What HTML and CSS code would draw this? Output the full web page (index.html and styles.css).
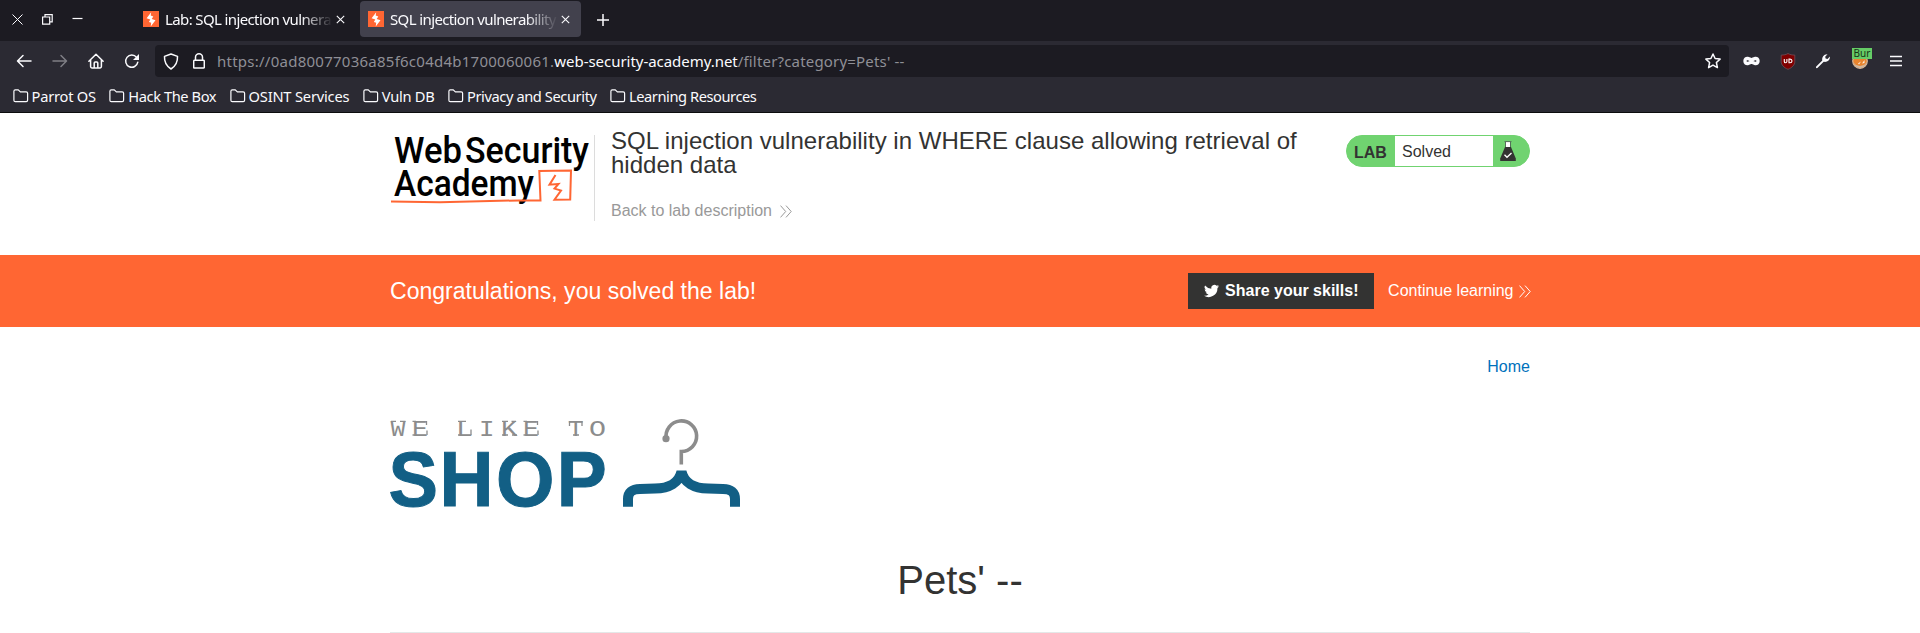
FILE: index.html
```html
<!DOCTYPE html>
<html lang="en">
<head>
<meta charset="utf-8">
<title>SQL injection vulnerability in WHERE clause allowing retrieval of hidden data</title>
<link rel="stylesheet" href="styles.css">
</head>
<body>
<svg class="defs" width="0" height="0">
  <symbol id="bolt" viewBox="0 0 16 16"><rect width="16" height="16" fill="#ff6633"/><path d="M8.2 1.2 3.6 7.2 7.3 8.6 5.9 10.9 8.2 11.7 7.7 15.6 12.5 9.3 8.7 7.9 10.3 5.4 7.7 4.5Z" fill="#fff"/></symbol>
  <symbol id="close" viewBox="0 0 9 9"><path d="M.8.8 8.2 8.2M8.2.8.8 8.2" fill="none" stroke="currentColor" stroke-width="1.1"/></symbol>
  <symbol id="folder" viewBox="0 0 16 14"><path d="M.9 11.2V2.3Q.9.9 2.3.9H5.2L7.4 2.9H13.2Q14.6 2.9 14.6 4.3V11.2Q14.6 12.6 13.2 12.6H2.3Q.9 12.6.9 11.2Z" fill="none" stroke="currentColor" stroke-width="1.2"/></symbol>
  <symbol id="more" viewBox="0 0 12 13"><path d="M.5.6 5.7 6.5.5 12.4M6 .6 11.2 6.5 6 12.4" fill="none" stroke="currentColor" stroke-width="1"/></symbol>
</svg>

<header class="browser">
  <div class="tabstrip">
    <div class="window-controls">
      <svg width="11" height="11" viewBox="0 0 11 11"><path d="M.5.5 10.5 10.5M10.5.5.5 10.5" class="line thin"/></svg>
      <svg width="11" height="11" viewBox="0 0 11 11"><path d="M.6 3H7.7V10.2H.6ZM3 3V.6H10.2V7.8H7.7" class="line"/></svg>
      <svg width="11" height="11" viewBox="0 0 11 11"><path d="M.5 4.500H10.500" class="line"/></svg>
    </div>
    <div class="tab">
      <svg class="favicon"><use href="#bolt"/></svg>
      <span class="tab-title">Lab: SQL injection vulnera</span>
      <svg class="tab-close"><use href="#close"/></svg>
    </div>
    <div class="tab active">
      <svg class="favicon"><use href="#bolt"/></svg>
      <span class="tab-title">SQL injection vulnerability</span>
      <svg class="tab-close"><use href="#close"/></svg>
    </div>
    <svg class="new-tab" viewBox="0 0 12 12"><path d="M6 .3V11.7M.3 6H11.7" class="line mid"/></svg>
  </div>

  <div class="toolbar">
    <div class="nav">
      <svg width="16" height="16" viewBox="0 0 16 16"><path d="M15 8H1.8M7 2.5 1.5 8 7 13.5" class="line mid"/></svg>
      <svg class="disabled" width="16" height="16" viewBox="0 0 16 16"><path d="M1 8H14.2M9 2.5 14.5 8 9 13.5" class="line mid"/></svg>
      <svg width="16" height="16" viewBox="0 0 16 16"><path d="M.9 8.3 8 1.2 15.1 8.3M2.6 7V13.6Q2.6 14.9 3.9 14.9H12.1Q13.4 14.9 13.4 13.6V7M6.2 14.9V10Q6.2 9 7.2 9H8.8Q9.8 9 9.8 10V14.9" class="line mid"/></svg>
      <svg width="16" height="16" viewBox="0 0 16 16"><path d="M13.8 9.2A6.1 6.1 0 1 1 12.6 4.4" class="line mid"/><path d="M15 1V7H9Z" fill="currentColor"/></svg>
    </div>
    <div class="urlbar">
      <svg width="16" height="17" viewBox="0 0 16 17"><path d="M8 1 14.5 3.4C14.8 9 12.5 13.2 8 16 3.5 13.2 1.2 9 1.5 3.4Z" class="line mid"/></svg>
      <svg class="lock" width="12" height="16" viewBox="0 0 12 16"><path d="M1.6 7.3H10.4Q11.3 7.3 11.3 8.2V14.2Q11.3 15.1 10.4 15.1H1.6Q.7 15.1.7 14.2V8.2Q.7 7.3 1.6 7.3ZM2.5 7.3V4.3A3.5 3.5 0 0 1 9.5 4.3V7.3" class="line mid"/></svg>
      <span class="url"><span class="subdomain">https://0ad80077036a85f6c04d4b1700060061.</span><b>web-security-academy.net</b><span class="path">/filter?category=Pets' --</span></span>
      <svg class="star" width="16" height="16" viewBox="0 0 16 16"><path d="M8 1 10.1 5.5 15.1 6.1 11.4 9.5 12.4 14.6 8 12.1 3.6 14.6 4.6 9.5.9 6.1 5.9 5.5Z" class="line mid"/></svg>
    </div>
    <div class="extensions">
      <svg width="17" height="16" viewBox="0 0 17 16"><path d="M8.500 8C7.300 5.500 2 3.800 2 8S7.300 10.500 8.500 8C9.700 5.500 15 3.800 15 8S9.700 10.500 8.500 8Z" fill="none" stroke="#fbfbfe" stroke-width="3.400"/></svg>
      <svg width="16" height="17" viewBox="0 0 16 17"><path d="M8 .5C10 1.700 12 2 14.800 2.100V8.500C14.800 12 12 14.700 8 16.300 4 14.700 1.200 12 1.200 8.500V2.100C4 2 6 1.700 8 .5Z" fill="#800000" stroke="#6c4a52" stroke-width=".9"/><path d="M4.300 6V8.500Q4.300 9.800 5.500 9.800T6.900 8.500V6M9 6.100V9.700H10Q12 9.600 12 7.900T10 6.100Z" fill="none" stroke="#fff" stroke-width="1.100"/></svg>
      <svg width="16" height="16" viewBox="0 0 16 16"><path d="M1 13.800 7.300 7.500C6.700 4.300 8.800 1.100 12.500 1.300L10.200 3.700 10.600 5.600 12.500 6 14.900 3.600C15.200 7.400 11.800 9.600 8.700 8.800L2.400 15.100Q.5 15.500 1 13.800Z" fill="#fbfbfe"/></svg>
      <span class="proxy">
        <svg width="16" height="16" viewBox="0 0 16 16"><circle cx="8" cy="8" r="7.300" fill="#e8842e" stroke="#d8b89a" stroke-width="1.200"/><path d="M1 9Q3 14.500 8 15 13 14.500 15 9L12 12 8 13 4 12Z" fill="#cdb9a6"/><path d="M3 7.500 6 10.500 9 8.500 7 11.500ZM12.500 7 10 10.500 12.500 10Z" fill="#fff0df"/></svg>
        <span class="proxy-badge">Bur</span>
      </span>
      <svg width="12" height="12" viewBox="0 0 12 12"><path d="M0 1.500H12M0 6H12M0 10.500H12" class="line mid"/></svg>
    </div>
  </div>

  <nav class="bookmarks">
    <span class="bookmark parrot"><svg><use href="#folder"/></svg>Parrot OS</span>
    <span class="bookmark htb"><svg><use href="#folder"/></svg>Hack The Box</span>
    <span class="bookmark osint"><svg><use href="#folder"/></svg>OSINT Services</span>
    <span class="bookmark vuln"><svg><use href="#folder"/></svg>Vuln DB</span>
    <span class="bookmark privacy"><svg><use href="#folder"/></svg>Privacy and Security</span>
    <span class="bookmark learning"><svg><use href="#folder"/></svg>Learning Resources</span>
  </nav>
</header>

<section class="lab-header container">
  <svg class="academy-logo" width="204" height="86" viewBox="390 135 204 86">
    <g class="logo-text">
      <text x="394" y="163" textLength="68" lengthAdjust="spacingAndGlyphs">Web</text>
      <text x="465" y="163" textLength="124" lengthAdjust="spacingAndGlyphs">Security</text>
      <text x="394" y="196" textLength="140" lengthAdjust="spacingAndGlyphs">Academy</text>
    </g>
    <path d="M391 201.500 440 202.300 519 200.400H540.500L539.300 171 571 170.500 570.200 199.400 554.500 199.700 561 190.600 554.500 188.600 558.500 184 549.500 184.700 555.500 175" fill="none" stroke="#ff6633" stroke-width="2"/>
  </svg>
  <div class="lab-title">
    <h2>SQL injection vulnerability in WHERE clause allowing retrieval of hidden data</h2>
    <a class="back">Back to lab description <svg class="more"><use href="#more"/></svg></a>
  </div>
  <div class="lab-status">
    <span class="lab-label">LAB</span>
    <span class="lab-state">Solved</span>
    <svg width="16" height="20" viewBox="0 0 16 20"><path d="M5.500 1H10.500V7H5.500Z" fill="#fff"/><path d="M4.500.6H11.500M5.500 1V7M10.500 1V7" stroke="#55705a" fill="none"/><path d="M5 6H11L15.800 17.500V20H.2V17.500Z" fill="#333332"/><path d="M4.500 13.800 7 16.300 11.500 12" fill="none" stroke="#fff" stroke-width="1.300"/></svg>
  </div>
</section>

<section class="banner">
  <div class="container banner-row">
    <h4>Congratulations, you solved the lab!</h4>
    <a class="share"><svg width="15" height="14" viewBox="0 0 24 20"><path d="M24 2.400a9.800 9.800 0 0 1-2.800.8A4.900 4.900 0 0 0 23.300.5a9.800 9.800 0 0 1-3.100 1.200 4.900 4.900 0 0 0-8.400 4.500A14 14 0 0 1 1.700 1a4.900 4.900 0 0 0 1.500 6.600A4.900 4.900 0 0 1 1 7a4.900 4.900 0 0 0 3.900 4.900 4.900 4.900 0 0 1-2.200.1 4.900 4.900 0 0 0 4.600 3.400A9.900 9.900 0 0 1 0 17.500 14 14 0 0 0 21.500 5 10 10 0 0 0 24 2.400Z" fill="#fff"/></svg>Share your skills!</a>
    <a class="continue">Continue learning <svg class="more"><use href="#more"/></svg></a>
  </div>
</section>

<main class="container shop">
  <nav class="top-links"><a>Home</a></nav>
  <svg class="shop-logo" width="352" height="92" viewBox="389 418 352 92">
    <g class="tagline">
      <text x="390.500" y="435.700" textLength="15" lengthAdjust="spacingAndGlyphs">W</text>
      <text x="412" y="435.700" textLength="16" lengthAdjust="spacingAndGlyphs">E</text>
      <text x="456" y="435.700" textLength="17" lengthAdjust="spacingAndGlyphs">L</text>
      <text x="479" y="435.700" textLength="15.500" lengthAdjust="spacingAndGlyphs">I</text>
      <text x="501" y="435.700" textLength="16.500" lengthAdjust="spacingAndGlyphs">K</text>
      <text x="523" y="435.700" textLength="16" lengthAdjust="spacingAndGlyphs">E</text>
      <text x="568" y="435.700" textLength="15.500" lengthAdjust="spacingAndGlyphs">T</text>
      <text x="589" y="435.700" textLength="17" lengthAdjust="spacingAndGlyphs">O</text>
    </g>
    <path d="M391 421.300H396M400 421.300H405.500M412.500 421.300H416M412.500 435H416M426.500 421V425M427 430.500V435M458 421.300H466M458 435H461M471 429.500V435M502 421.300H508M511.500 421.300H516M502 435H508M512 435H517M523.500 421.300H527M523.500 435H527M537.500 421V425M538 430.500V435M569.500 421V426M582 421V426M573 435H579" fill="none" stroke="#8c8c8c" stroke-width="1.300"/>
    <g class="shop-word">
      <text x="388.500" y="506" textLength="49.500" lengthAdjust="spacingAndGlyphs">S</text>
      <text x="439.500" y="506" textLength="54" lengthAdjust="spacingAndGlyphs">H</text>
      <text x="496" y="506" textLength="58.500" lengthAdjust="spacingAndGlyphs">O</text>
      <text x="556.800" y="506" textLength="50" lengthAdjust="spacingAndGlyphs">P</text>
    </g>
    <path d="M666.200 438.500A15.300 15.300 0 1 1 681.300 451.500V464.500" fill="none" stroke="#8c8c8c" stroke-width="3.600"/>
    <circle cx="666" cy="438.700" r="3.600" fill="#8c8c8c"/>
    <path d="M628 506.700V499Q628 489 640 488.900L655 488.600C669 488.300 679 483 681.500 471.500 684 483 694 488.300 708 488.600L723 488.900Q735 489 735 499V506.700" fill="none" stroke="#125f85" stroke-width="10"/>
  </svg>
  <h1>Pets' --</h1>
</main>
</body>
</html>
```

FILE: styles.css
```css
* { box-sizing: border-box; }
body { margin: 0; height: 633px; overflow: hidden; background: #fff; color: #333332; font: 16px/24px "Liberation Sans", Arial, sans-serif; }
svg { display: block; flex: none; }
.defs { position: absolute; }
h1, h2, h4 { margin: 0; font-weight: 400; }
.line { fill: none; stroke: currentColor; stroke-width: 1.2; }
.line.thin { stroke-width: 1; }
.line.mid { stroke-width: 1.5; stroke-linecap: round; stroke-linejoin: round; }

.browser { height: 113px; background: #2b2a33; color: #fbfbfe; border-bottom: 1px solid #0c0c0d; font: 15px/20px "Noto Sans", sans-serif; }
.tabstrip { display: flex; align-items: flex-start; height: 41px; background: #1c1b22; }
.window-controls { display: flex; gap: 19px; padding: 14px 0 0 12px; width: 135px; }
.tab { display: flex; align-items: center; width: 221px; height: 36px; margin: 1px 4px 0 0; padding: 0 11px 0 8px; border-radius: 4px; }
.tab.active { background: #42414d; }
.favicon { width: 16px; height: 16px; }
.tab-title { flex: 1; min-width: 0; height: 24px; margin-left: 6px; line-height: 24px; letter-spacing: -.62px; white-space: nowrap; -webkit-mask-image: linear-gradient(to left, transparent, #000 32px); mask-image: linear-gradient(to left, transparent, #000 32px); }
.tab-close { width: 9px; height: 9px; margin-left: 3px; }
.new-tab { width: 12px; height: 12px; margin: 14px 0 0 12px; }

.toolbar { display: flex; align-items: center; height: 40px; padding: 0 18px 0 16px; }
.nav { display: flex; gap: 20px; width: 139px; }
.disabled { opacity: .4; }
.urlbar { display: flex; align-items: center; width: 1574px; height: 32px; padding: 0 8px; border-radius: 4px; background: #1c1b22; }
.lock { margin-left: 14px; }
.url { flex: 1; margin-left: 12px; color: #8f8f96; white-space: nowrap; }
.url b { font-weight: 400; color: #fbfbfe; letter-spacing: -.04px; }
.subdomain { letter-spacing: .25px; }
.path { letter-spacing: .18px; }
.extensions { display: flex; flex: 1; align-items: center; justify-content: space-between; margin-left: 14px; }
.proxy { position: relative; width: 20px; padding-left: 1px; }
.proxy-badge { position: absolute; left: 1px; top: -5px; width: 20px; height: 11px; padding-left: 2px; background: #66cc66; color: #163516; font-size: 10px; line-height: 11px; }

.bookmarks { display: flex; gap: 13.4px; height: 31px; padding: 5px 0 0 12.5px; font-size: 14.67px; }
.bookmark { display: flex; gap: 3px; height: 20px; align-items: center; white-space: nowrap; }
.bookmark svg { width: 16px; height: 14px; }
.parrot { letter-spacing: -.22px; }
.htb { letter-spacing: -.42px; }
.osint { letter-spacing: -.19px; }
.vuln { letter-spacing: -.25px; }
.privacy { letter-spacing: -.41px; }
.learning { letter-spacing: -.44px; }

.container { width: 1140px; margin: 0 auto; }
.lab-header { display: flex; height: 142px; padding-top: 22px; align-items: flex-start; }
.logo-text { font: 500 37.5px Roboto, sans-serif; fill: #000; }
.lab-title { width: 735px; height: 86px; padding-left: 16px; border-left: 1px solid #dcdcdc; }
.lab-title h2 { width: 700px; margin-top: -6px; font-size: 24px; line-height: 24px; letter-spacing: .015px; }
.more { display: inline-block; width: 12px; height: 13px; vertical-align: -2px; }
.back { display: block; margin-top: 22px; color: #999; }
.back .more { margin-left: 4px; }
.lab-status { display: flex; align-items: center; width: 184px; height: 32px; margin-left: auto; border: 1px solid #70d370; border-radius: 16px; background: #70d370; }
.lab-label { width: 48px; padding-left: 7px; padding-top: 3px; font-weight: 700; }
.lab-state { width: 98px; height: 30px; margin-right: 7px; padding-left: 7px; background: #fff; line-height: 31px; }

.banner { height: 72px; background: #ff6633; color: #fff; }
.banner-row { display: flex; align-items: center; height: 72px; }
.banner h4 { flex: 1; font-size: 23.04px; }
.share { display: flex; align-items: center; gap: 6px; width: 186px; height: 36px; padding-left: 16px; background: #333332; font-weight: 700; white-space: nowrap; }
.continue { display: flex; gap: 5px; align-items: center; margin-left: 14px; white-space: nowrap; }
.continue .more { width: 12px; margin-right: -.5px; }

.top-links { padding-top: 28px; text-align: right; color: #0071bc; }
.shop-logo { margin: 39px 0 0 -1px; }
.tagline { font: 22.5px "Liberation Mono", monospace; fill: #8c8c8c; }
.shop-word { font: 700 78px "Liberation Sans", sans-serif; fill: #125f85; stroke: #125f85; stroke-width: 1px; }
.shop h1 { height: 123px; padding-top: 46px; border-bottom: 1px solid #e4e8e8; font-size: 40px; line-height: 48px; text-align: center; }
```
